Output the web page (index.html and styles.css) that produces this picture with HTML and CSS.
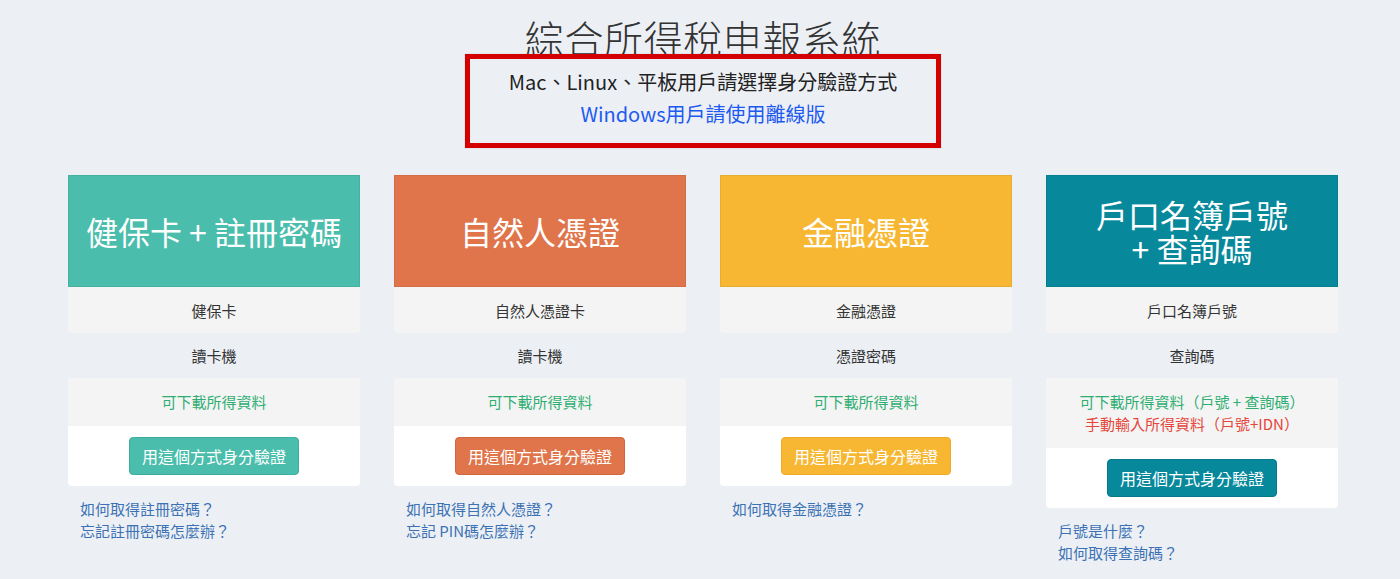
FILE: index.html
```html
<!DOCTYPE html>
<html lang="zh-Hant">
<head>
<meta charset="utf-8">
<title>綜合所得稅申報系統</title>
<link rel="stylesheet" href="styles.css">
</head>
<body>
<div class="page">
  <h1 class="title">綜合所得稅申報系統</h1>
  <div class="notice">
    <p class="notice-line">Mac、Linux、平板用戶請選擇身分驗證方式</p>
    <p class="notice-line"><a class="notice-link" href="#">Windows用戶請使用離線版</a></p>
  </div>
  <div class="cards">
    <div class="card">
      <div class="card-head head-teal">健保卡 + 註冊密碼</div>
      <div class="row row-gray">健保卡</div>
      <div class="row">讀卡機</div>
      <div class="box">
        <div class="box-top"><span class="ok">可下載所得資料</span></div>
        <div class="box-bottom"><a class="btn btn-teal" href="#">用這個方式身分驗證</a></div>
      </div>
      <div class="links">
        <a href="#">如何取得註冊密碼？</a>
        <a href="#">忘記註冊密碼怎麼辦？</a>
      </div>
    </div>
    <div class="card">
      <div class="card-head head-orange">自然人憑證</div>
      <div class="row row-gray">自然人憑證卡</div>
      <div class="row">讀卡機</div>
      <div class="box">
        <div class="box-top"><span class="ok">可下載所得資料</span></div>
        <div class="box-bottom"><a class="btn btn-orange" href="#">用這個方式身分驗證</a></div>
      </div>
      <div class="links">
        <a href="#">如何取得自然人憑證？</a>
        <a href="#">忘記 PIN碼怎麼辦？</a>
      </div>
    </div>
    <div class="card">
      <div class="card-head head-yellow">金融憑證</div>
      <div class="row row-gray">金融憑證</div>
      <div class="row">憑證密碼</div>
      <div class="box">
        <div class="box-top"><span class="ok">可下載所得資料</span></div>
        <div class="box-bottom"><a class="btn btn-yellow" href="#">用這個方式身分驗證</a></div>
      </div>
      <div class="links">
        <a href="#">如何取得金融憑證？</a>
      </div>
    </div>
    <div class="card">
      <div class="card-head head-dark head-two"><span>戶口名簿戶號</span><span>+ 查詢碼</span></div>
      <div class="row row-gray">戶口名簿戶號</div>
      <div class="row">查詢碼</div>
      <div class="box">
        <div class="box-top"><span class="ok">可下載所得資料（戶號 + 查詢碼）</span><span class="warn">手動輸入所得資料（戶號+IDN）</span></div>
        <div class="box-bottom"><a class="btn btn-dark" href="#">用這個方式身分驗證</a></div>
      </div>
      <div class="links">
        <a href="#">戶號是什麼？</a>
        <a href="#">如何取得查詢碼？</a>
      </div>
    </div>
  </div>
</div>
</body>
</html>
```

FILE: styles.css
```css
* { box-sizing: border-box; }

html, body {
  margin: 0;
  padding: 0;
  background: #ecf0f5;
  font-family: "Noto Sans CJK TC", "Noto Sans", sans-serif;
  color: #333;
}

.page {
  display: flex;
  flex-direction: column;
  align-items: center;
  padding-left: 6px;
}

.title {
  margin: 21px 0 0;
  font-size: 39px;
  line-height: 33px;
  font-weight: 300;
  color: #333;
  letter-spacing: 0.6px;
}

.notice {
  width: 476px;
  height: 94px;
  border: 5px solid #d40000;
  box-shadow: 0 0 1px rgba(0,0,0,0.25);
  padding-top: 7px;
  text-align: center;
}

.notice-line {
  margin: 0;
  font-size: 20px;
  line-height: 32px;
  color: #222;
}

.notice-link {
  color: #1e5af0;
  text-decoration: none;
}

.cards {
  margin-top: 27px;
  display: flex;
  gap: 34px;
}

.card {
  width: 292px;
  display: flex;
  flex-direction: column;
}

.card-head {
  height: 112px;
  display: flex;
  flex-direction: column;
  align-items: center;
  justify-content: center;
  text-align: center;
  color: #fff;
  font-size: 32px;
  line-height: 34px;
  border: 1px solid rgba(0,0,0,0.06);
}

.head-two span { display: block; }

.head-teal { background: #4abdac; }
.head-orange { background: #e0744a; }
.head-yellow { background: #f7b733; }
.head-dark { background: #07889b; }

.row {
  height: 45px;
  display: flex;
  align-items: center;
  justify-content: center;
  font-size: 15px;
  color: #333;
}

.row-gray {
  height: 46px;
  background: #f4f4f4;
  border-radius: 0 0 4px 4px;
}

.box {
  border-radius: 4px;
  overflow: hidden;
  background: #fff;
}

.box-top {
  background: #f4f4f4;
  padding: 13px 0;
  display: flex;
  flex-direction: column;
  align-items: center;
  font-size: 15px;
  line-height: 22px;
}

.ok { color: #2fae72; }
.warn { color: #e5463a; }

.box-bottom {
  height: 60px;
  display: flex;
  align-items: center;
  justify-content: center;
}

.btn {
  display: inline-block;
  width: 170px;
  padding: 7px 0;
  border: 1px solid;
  border-radius: 4px;
  color: #fff;
  text-align: center;
  font-size: 16px;
  line-height: 22px;
  text-decoration: none;
}

.btn-teal { background: #4abdac; border-color: #3eae9d; }
.btn-orange { background: #e0744a; border-color: #d2663c; }
.btn-yellow { background: #f7b733; border-color: #eea925; }
.btn-dark { background: #07889b; border-color: #067a8b; }

.links {
  padding: 12px 12px 0;
  display: flex;
  flex-direction: column;
  font-size: 15px;
  line-height: 22px;
}

.links a {
  color: #3c72b4;
  text-decoration: none;
}
```
